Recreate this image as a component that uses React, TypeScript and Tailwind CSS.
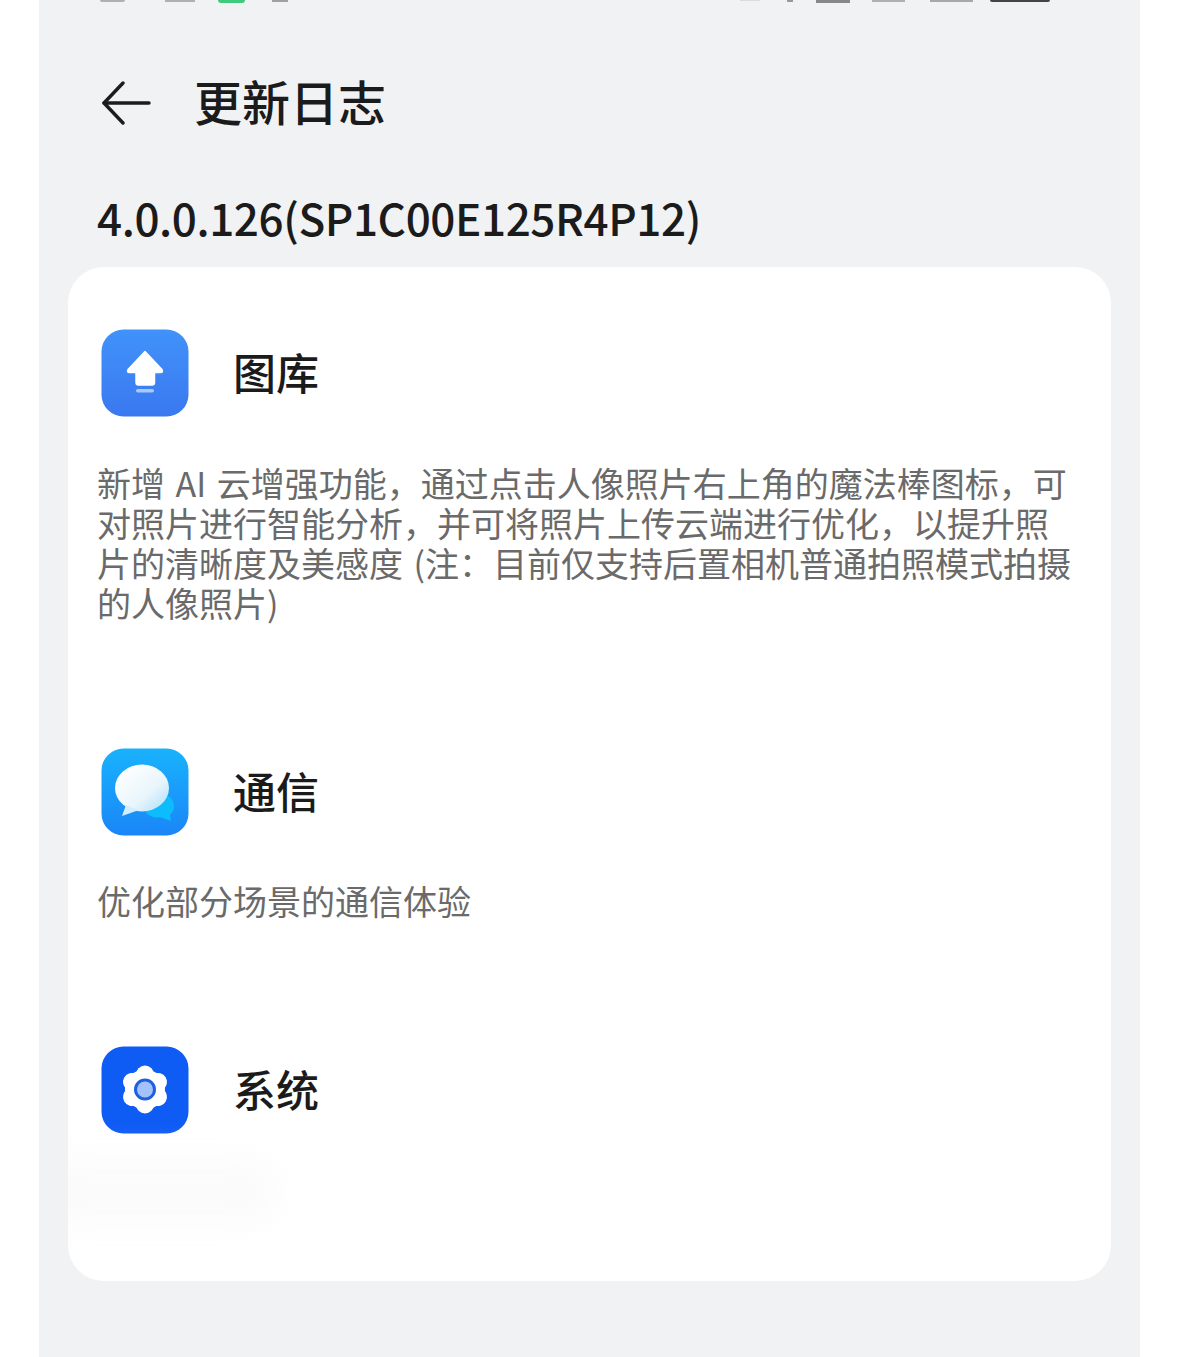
function UploadIcon() {
  return (
    <svg viewBox="0 0 88 88" className="h-[88px] w-[88px] shrink-0">
      <defs>
        <linearGradient id="up" x1="0" y1="0" x2="0" y2="1">
          <stop offset="0" stopColor="#4192fa" />
          <stop offset="1" stopColor="#3a78f0" />
        </linearGradient>
      </defs>
      <rect x="0.5" y="0.5" width="87" height="87" rx="22" fill="url(#up)" />
      <path d="M44 22.5 L61 40.5 Q62.5 43.5 59.5 43.5 H53.5 V53.5 Q53.5 56 51 56 H37.5 Q35 56 35 53.5 V43.5 H28.5 Q25.5 43.5 27 40.5 Z" fill="#fff" stroke="#fff" strokeWidth="1.5" strokeLinejoin="round" />
      <rect x="35" y="60" width="18" height="3.5" rx="1.75" fill="#a9c8fb" />
    </svg>
  );
}

function MessageIcon() {
  return (
    <svg viewBox="0 0 88 88" className="h-[88px] w-[88px] shrink-0">
      <defs>
        <linearGradient id="msgbg" x1="0" y1="0" x2="0" y2="1">
          <stop offset="0" stopColor="#19b2fd" />
          <stop offset="1" stopColor="#1a86f7" />
        </linearGradient>
        <linearGradient id="msgfront" x1="0.1" y1="0.1" x2="0.9" y2="0.9">
          <stop offset="0" stopColor="#ffffff" />
          <stop offset="0.65" stopColor="#e8f5fc" />
          <stop offset="1" stopColor="#b8e3fa" />
        </linearGradient>
      </defs>
      <rect x="0.5" y="0.5" width="87" height="87" rx="22" fill="url(#msgbg)" />
      <path d="M56 45 C65 45 73 50 73 58 C73 62 71.5 64.5 69 66.5 L70 73 L60 69.5 C53 70 47 68 44 63 Z" fill="#0dbcfc" />
      <ellipse cx="41" cy="40" rx="27" ry="23.5" fill="url(#msgfront)" />
      <path d="M25 57 L21 68 L38 62 Z" fill="#d5eefb" />
    </svg>
  );
}

function GearIcon() {
  const lobes = [90, 30, -30, -90, -150, 150];
  return (
    <svg viewBox="0 0 88 88" className="h-[88px] w-[88px] shrink-0">
      <rect x="0.5" y="0.5" width="87" height="87" rx="22" fill="#0f5cf5" />
      <circle cx="44" cy="43.5" r="20" fill="#fff" />
      {lobes.map((deg) => (
        <line
          key={deg}
          x1="44"
          y1="43.5"
          x2={44 + 15 * Math.cos((deg * Math.PI) / 180)}
          y2={43.5 + 15 * Math.sin((deg * Math.PI) / 180)}
          stroke="#fff"
          strokeWidth="18"
          strokeLinecap="round"
        />
      ))}
      <circle cx="44" cy="43.5" r="9.5" fill="#a4c1fb" stroke="#1d5fe0" strokeWidth="3" />
    </svg>
  );
}

function Section({ icon, title }: { icon: React.ReactNode; title: string }) {
  return (
    <div className="flex items-center gap-[44px] pl-[33px]">
      {icon}
      <h2 className="pb-[4px] text-[43px] leading-[56px] font-medium text-[#1b1b1b]">{title}</h2>
    </div>
  );
}

function StatusBar() {
  return (
    <div className="flex h-[3px] items-start overflow-hidden pl-[61px] pr-[90px]">
      <div className="h-[2px] w-[25px] rounded-b bg-[#b0b0b0]" />
      <div className="ml-[40px] h-[2px] w-[30px] bg-[#b0b0b0]" />
      <div className="ml-[23px] h-[3px] w-[27px] rounded-b bg-[#3ecb7c]" />
      <div className="ml-[27px] h-[2px] w-[16px] bg-[#a0a0a0]" />
      <div className="ml-auto h-[1px] w-[20px] bg-[#dcdcdc]" />
      <div className="ml-[27px] h-[2px] w-[6px] bg-[#999]" />
      <div className="ml-[23px] h-[3px] w-[34px] bg-[#888]" />
      <div className="ml-[22px] h-[2px] w-[33px] bg-[#b0b0b0]" />
      <div className="ml-[25px] h-[2px] w-[43px] bg-[#a8a8a8]" />
      <div className="ml-[17px] h-[2px] w-[60px] rounded-b bg-[#444]" />
    </div>
  );
}

export default function App() {
  return (
    <div className="h-[1357px] overflow-hidden bg-white font-['Noto_Sans_CJK_SC','Noto_Sans',sans-serif]">
      <main className="ml-[39px] h-full w-[1101px] bg-[#f1f2f4]">
        <StatusBar />

        <header className="mt-[65px] flex items-center gap-[43px] pl-[62px]">
          <svg viewBox="0 0 50 44" className="h-[44px] w-[50px]" fill="none" stroke="#1c1c1c" strokeWidth="3.4" strokeLinecap="round" strokeLinejoin="round">
            <path d="M48 22 H3" />
            <path d="M22 2 L3 22 L22 42" />
          </svg>
          <h1 className="pb-[6px] text-[48px] leading-[64px] font-medium text-[#1b1b1b]">更新日志</h1>
        </header>

        <p className="mt-[51px] pl-[58px] text-[44px] leading-[56px] font-medium tracking-[-0.4px] text-[#1b1b1b]">
          4.0.0.126(SP1C00E125R4P12)
        </p>

        <section className="relative mx-[29px] mt-[22px] h-[1014px] overflow-hidden rounded-[36px] bg-white pt-[62px]">
          <Section icon={<UploadIcon />} title="图库" />
          <p className="mt-[46px] pl-[29px] text-[34px] leading-[40px] whitespace-nowrap text-[#6a6a6a] [word-spacing:3px]">
            新增 AI 云增强功能，通过点击人像照片右上角的魔法棒图标，可
            <br />
            对照片进行智能分析，并可将照片上传云端进行优化，以提升照
            <br />
            片的清晰度及美感度 (注：目前仅支持后置相机普通拍照模式拍摄
            <br />
            的人像照片)
          </p>

          <div className="mt-[125px]">
            <Section icon={<MessageIcon />} title="通信" />
          </div>
          <p className="mt-[45px] pl-[29px] text-[34px] leading-[40px] text-[#6a6a6a]">优化部分场景的通信体验</p>

          <div className="mt-[125px]">
            <Section icon={<GearIcon />} title="系统" />
          </div>

          {/* faint smudge in the lower left corner */}
          <div className="absolute top-[890px] left-[-30px] h-[70px] w-[240px] rounded-full bg-[#fbfbfc] blur-[14px]" />
        </section>
      </main>
    </div>
  );
}
